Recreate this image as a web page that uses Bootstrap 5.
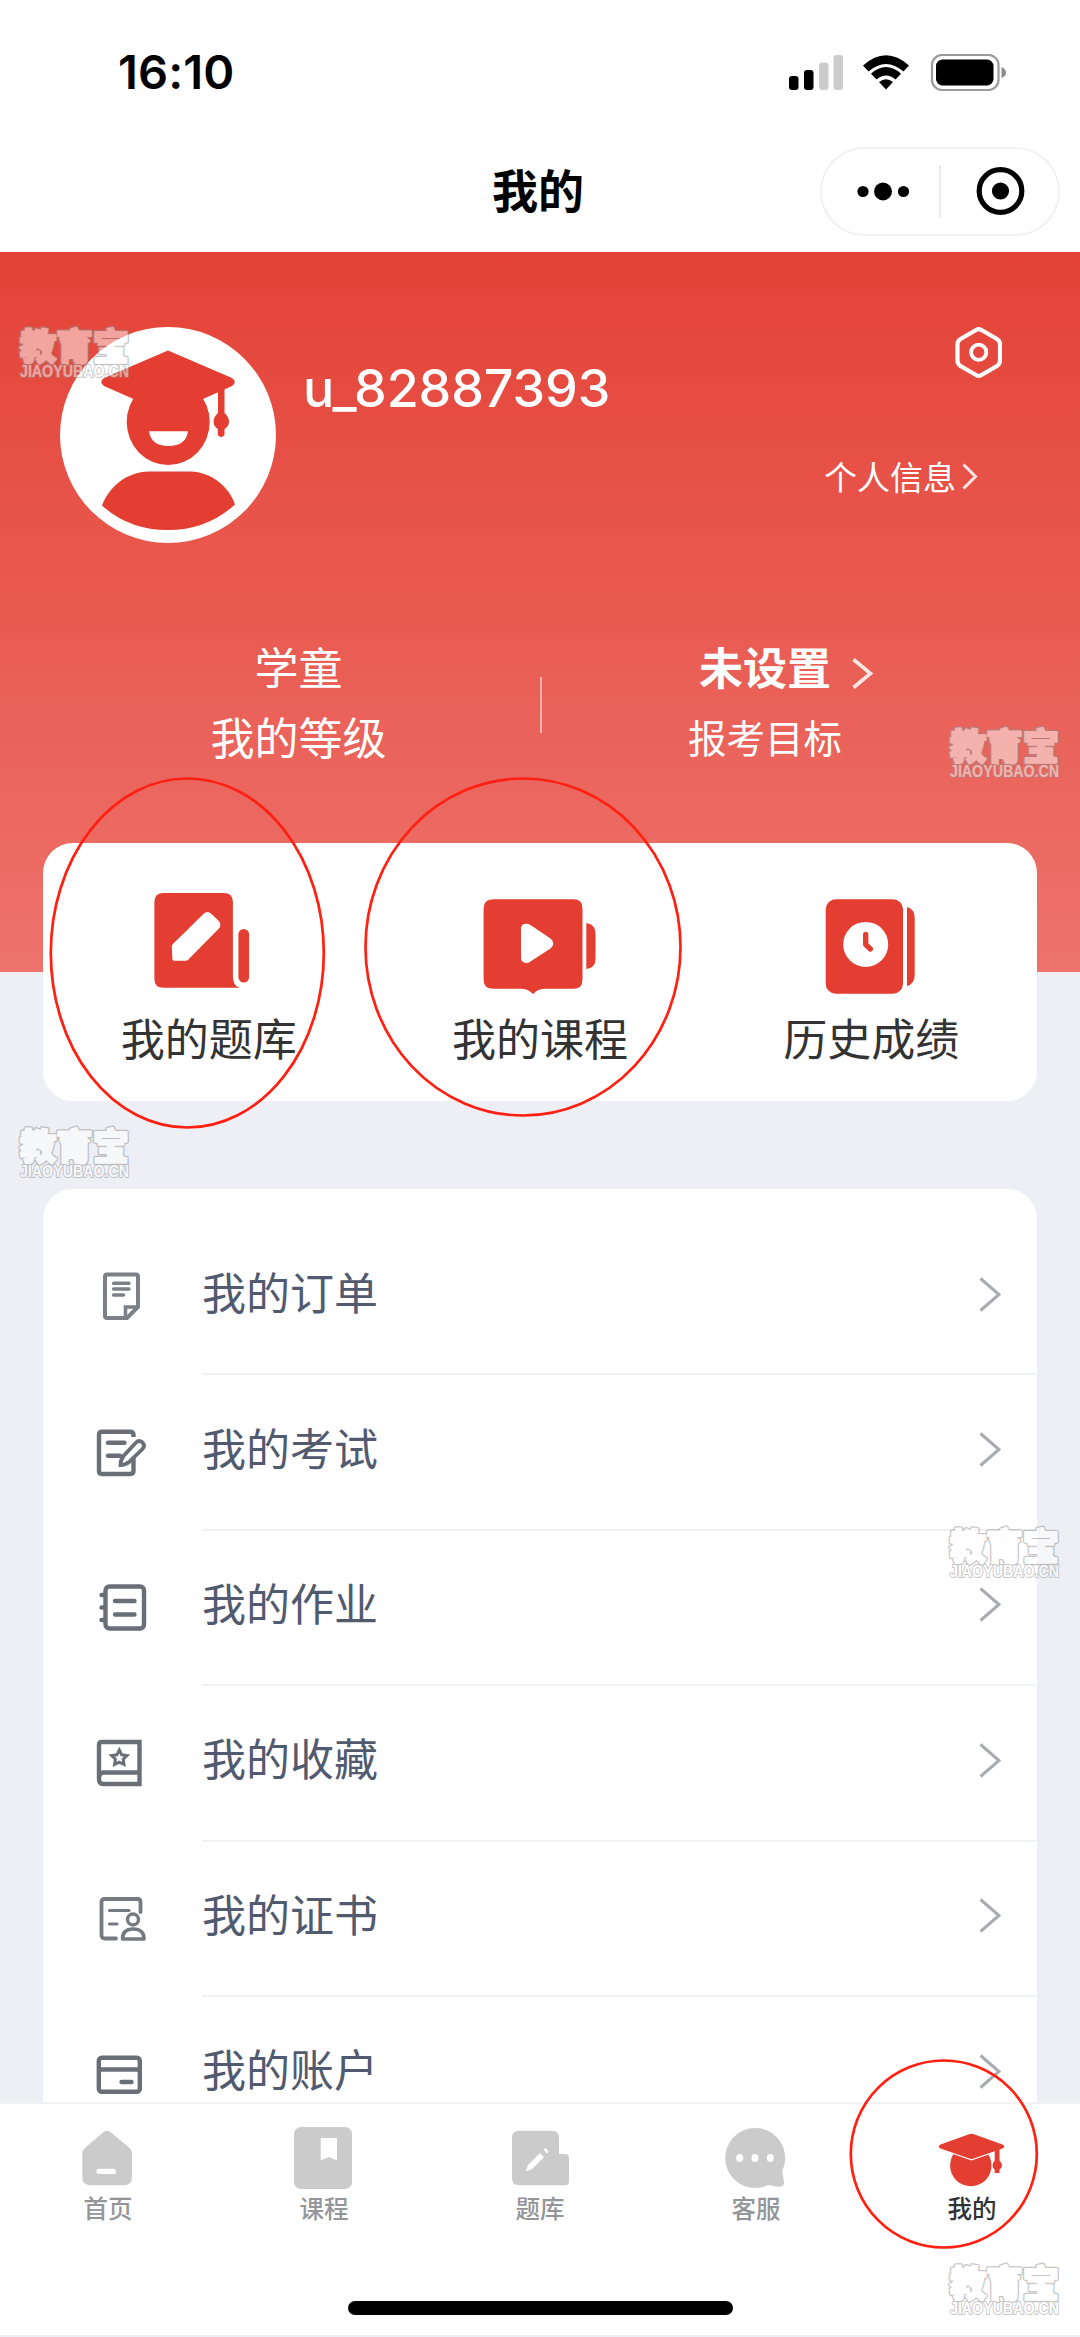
<!DOCTYPE html>
<html lang="zh-CN">
<head>
<meta charset="utf-8">
<meta name="viewport" content="width=device-width, initial-scale=1">
<title>我的</title>
<link href="https://cdn.jsdelivr.net/npm/bootstrap@5.3.0/dist/css/bootstrap.min.css" rel="stylesheet">
<style>
  body { background: #eeeff4; font-family: "Noto Sans CJK SC", sans-serif; }
  svg { display: block; flex: none; }
  .phone { width: 1080px; height: 2337px; }
  .statusbar { height: 147px; padding: 54px 73px 0 118px; }
  .clock { font: 600 47px/36px Inter, sans-serif; letter-spacing: .1px; }
  .titlebar { height: 105px; padding-right: 20px; }
  .page-title { font-size: 46px; line-height: 82px; font-weight: 700; padding-left: 492px; }
  .capsule { width: 240px; height: 89px; border: 2px solid #f1f1f1; border-radius: 45px; }
  .hero { height: 720px; background: linear-gradient(#e44236, #ed736c); padding-top: 75px; }
  .hero-top { padding: 0 78px 0 60px; height: 216px; }
  .username { font: 500 52px/60px Inter, sans-serif; letter-spacing: -.1px; margin: 32px 0 0 27px; }
  .info-link { font-size: 33px; line-height: 40px; margin: 77px 24px 0 0; gap: 6px; }
  .stats { margin-top: 88px; padding: 0 92px 0 57px; }
  .stat { width: 483px; }
  .stat + .vline + .stat { width: 446px; }
  .stat-line { font-size: 44px; line-height: 70px; }
  .goal { font-size: 38.5px; }
  .goal-value svg { margin: 14px -42px 0 21px; }
  .vline { width: 2px; height: 56px; background: rgba(255,255,255,.5); margin-top: 46px; }
  .panel { background: #fff; border-radius: 30px; margin: 0 43px; }
  .quick { margin-top: -129px; height: 258px; padding-top: 45px; position: relative; }
  .quick-label { font-size: 44px; line-height: 66px; color: #333; margin-top: 6px; }
  .menu-panel { margin-top: 88px; padding-top: 31px; height: 1100px; }
  .menu-row { height: 155.4px; padding-left: 47px; }
  .menu-row > svg { margin-bottom: 7px; }
  .menu-body { height: 155.4px; margin-left: 52px; padding: 0 36px 5px 0; border-bottom: 2px solid #f1f2f4; font-size: 44px; line-height: 66px; color: #515a6e; }
  .menu-body span { position: relative; top: -3px; }
  .scroll { min-height: 0; }
  .tabbar { height: 235px; border-top: 2px solid #f2f2f4; border-bottom: 2px solid #eeeff4; background: #fff; }
  .tab { width: 216px; padding-top: 20px; font-size: 24.5px; line-height: 27px; font-weight: 500; color: #949599; }
  .tab.active { color: #2f3336; }
  .home-bar { width: 385px; height: 14px; border-radius: 7px; background: #000; margin-bottom: 20px; }
  .overlay-art { left: 0; top: 0; pointer-events: none; }
  .wm { opacity: .5; stroke-linejoin: round; }
  .wm-cn { font: 900 36px "Noto Sans CJK SC", sans-serif; paint-order: stroke; }
  .wm-en { font: 700 16.5px "Liberation Sans", sans-serif; fill: #fff; stroke: #8f8f8f; stroke-width: 2px; paint-order: stroke; }
</style>
</head>
<body>
<svg width="0" height="0" class="position-absolute">
  <defs>
    <g id="wmark" class="wm">
      <text class="wm-cn" x="0" y="31" fill="#fff" stroke="#8f8f8f" stroke-width="4.600" textLength="109" lengthAdjust="spacingAndGlyphs">教育宝</text>
      <text class="wm-cn" x="0" y="31" fill="#fff" stroke="#fff" stroke-width="2" textLength="109" lengthAdjust="spacingAndGlyphs" aria-hidden="true">教育宝</text>
      <text class="wm-en" x="0" y="48" textLength="109" lengthAdjust="spacingAndGlyphs">JIAOYUBAO.CN</text>
    </g>
    <path id="chev" d="M1.5 1.5 20 17.5 1.5 33.5" fill="none" stroke="#a9abb0" stroke-width="3"/>
  </defs>
</svg>
<div class="phone position-relative overflow-hidden d-flex flex-column">
  <header class="bg-white flex-shrink-0">
    <div class="statusbar d-flex justify-content-between align-items-start">
      <div class="clock text-black">16:10</div>
      <svg width="218" height="37" viewBox="790 53 218 37">
        <rect x="790" y="75" width="9.5" height="14" rx="3"/><rect x="805" y="69" width="9.5" height="20" rx="3"/>
        <rect x="820" y="61.500" width="9.500" height="27.500" rx="3" fill="#ccc"/><rect x="834.500" y="54" width="9.500" height="35" rx="3" fill="#ccc"/>
        <path d="M864 64.500Q887 44 910 64.500L904.500 70.500Q887 55.500 869.500 70.500ZM872 72.700Q887 59.500 902 72.700L896.500 78.500Q887 70.500 877.500 78.500ZM880 81Q887 75.500 894 81L887 88.500Z"/>
        <rect x="933" y="54" width="66.500" height="35" rx="10" fill="none" stroke="#9b9b9b" stroke-width="2.200"/>
        <rect x="937" y="58.500" width="57.500" height="26" rx="6.500"/>
        <path d="M1002.500 66Q1007 68 1007 71.500T1002.500 77Z" fill="#8c8c8c"/>
      </svg>
    </div>
    <div class="titlebar d-flex justify-content-between align-items-start">
      <div class="page-title text-black">我的</div>
      <div class="capsule d-flex align-items-center">
        <svg width="236" height="85" viewBox="822 149 236 85">
          <circle cx="863" cy="191.500" r="5.600"/><circle cx="883" cy="191.500" r="9"/><circle cx="903.500" cy="191.500" r="5.600"/>
          <path d="M940 165V217" stroke="#e6e6e6" stroke-width="1.500"/>
          <circle cx="1000.500" cy="191" r="21.300" fill="none" stroke="#000" stroke-width="5.200"/><circle cx="1000.500" cy="191" r="8.600"/>
        </svg>
      </div>
    </div>
  </header>

  <main class="scroll flex-grow-1 overflow-hidden">
    <section class="hero text-white">
      <div class="hero-top d-flex align-items-start">
        <svg width="216" height="216" viewBox="0 0 216 216">
          <circle cx="108" cy="108" r="108" fill="#fff"/>
          <g fill="#e43d31">
            <ellipse cx="108.200" cy="95" rx="41.500" ry="43"/>
            <path d="M108 23.500 172 51Q177.500 55 172 59L143 72 73.500 72 44 59Q38.500 55 44 51Z"/>
            <path d="M158 62H164.500V86Q169 90 169 94.500T164.500 102V108Q161 112 157.800 108V102Q153.500 99 153.500 94.500T158 86Z"/>
            <path d="M89 144.500H130C152 145 169 160 175 177.500Q147 203 108 203T42 178.500C49 160 66 145 89 144.500Z"/>
          </g>
          <path d="M89 104.300H128Q126 119 108.500 119T89 104.300Z" fill="#fff"/>
        </svg>
        <div class="username">u_82887393</div>
        <div class="ms-auto d-flex flex-column align-items-end">
          <svg width="47" height="52" viewBox="955 327 47 52" fill="none" stroke="#fff" stroke-width="4.200">
            <path d="M976 330Q978.700 328.200 981.500 330L997 339Q1000 341 1000 344V361Q1000 364 997 366L981.500 375Q978.700 376.800 976 375L960.500 366Q957.500 364 957.500 361V344Q957.500 341 960.500 339Z"/>
            <circle cx="978.700" cy="352.300" r="7.600" stroke-width="3.800"/>
          </svg>
          <div class="info-link d-flex align-items-center"><span>个人信息</span>
            <svg width="16" height="27" viewBox="0 0 16 27"><path d="M1.500 1.500 13.500 13.500 1.500 25.500" fill="none" stroke="#fff" stroke-opacity=".85" stroke-width="3"/></svg>
          </div>
        </div>
      </div>
      <div class="stats d-flex align-items-start text-center">
        <div class="stat"><div class="stat-line">学童</div><div class="stat-line">我的等级</div></div>
        <div class="vline"></div>
        <div class="stat">
          <div class="stat-line goal-value fw-bold d-flex justify-content-center align-items-center">未设置
            <svg width="21" height="31" viewBox="0 0 21 31"><path d="M1.500 1.500 18.500 15.500 1.500 29.500" fill="none" stroke="#fff" stroke-opacity=".85" stroke-width="3.600"/></svg>
          </div>
          <div class="stat-line goal">报考目标</div>
        </div>
      </div>
    </section>

    <section class="panel quick row g-0 text-center">
      <div class="col d-flex flex-column align-items-center">
        <svg width="120" height="110" viewBox="148.600 888 120 110" fill="#e43d31">
          <path d="M163 893H223.500Q232.500 893 232.500 902V976Q232.500 986 239 987.700H163Q154 987.700 154 978.700V902Q154 893 163 893Z"/>
          <rect x="238" y="929" width="10.700" height="53.500" rx="5.300"/>
          <path d="M203.500 913.500Q207 910.500 210.500 913.500L218 920.500Q221.500 924.500 218.500 928.500L188 959.500Q187 960.700 185 960.700H173.500Q172 960.700 172 959L171.400 946.500Q171.400 945 172.500 944Z" fill="#fff"/>
        </svg>
        <div class="quick-label">我的题库</div>
      </div>
      <div class="col d-flex flex-column align-items-center">
        <svg width="120" height="110" viewBox="480 888 120 110" fill="#e43d31">
          <path d="M493.600 899.300H573.500Q582.500 899.300 582.500 908.300V979.700Q582.500 988.700 573.500 988.700H545Q539.500 988.700 536 991.500L533 994 530 991.500Q526.500 988.700 521 988.700H493.600Q483.600 988.700 483.600 979.700V908.300Q483.600 899.300 493.600 899.300Z"/>
          <path d="M586.300 923Q595.500 924.500 595.500 934V959Q595.500 968 586.300 969Z"/>
          <path d="M521 929Q521 924 525.500 923.700 528 923.500 530.500 925L550.500 938.500Q556 943.500 550.500 948.500L530.500 961.500Q528 963.500 525.500 963 521 962 521 957.500Z" fill="#fff"/>
        </svg>
        <div class="quick-label">我的课程</div>
      </div>
      <div class="col d-flex flex-column align-items-center">
        <svg width="120" height="110" viewBox="811.300 888 120 110" fill="#e43d31">
          <rect x="826" y="899.300" width="77.300" height="94.500" rx="10"/>
          <path d="M907.300 907Q915 909 915 918V975Q915 984 907.300 986Z"/>
          <circle cx="866" cy="944.400" r="22.500" fill="#fff"/>
          <path d="M866 934.500V944.500L870.700 949" fill="none" stroke="#e43d31" stroke-width="5.300" stroke-linecap="round" stroke-linejoin="round"/>
        </svg>
        <div class="quick-label">历史成绩</div>
      </div>
    </section>

    <section class="panel menu-panel">
      <div class="menu-row d-flex align-items-center">
        <svg width="60" height="60" viewBox="90 1264 60 60" fill="none" stroke="#7d8087" stroke-width="4">
          <path d="M107 1274.500H136Q138 1274.500 138 1276.500V1307L127 1318H107Q105 1318 105 1316V1276.500Q105 1274.500 107 1274.500Z"/>
          <path d="M125.500 1318V1307H138" stroke-width="3.600"/><path d="M113.500 1283.300H129M113.500 1289H129M113.500 1295H123.500" stroke-width="3.400" stroke-linecap="round"/>
        </svg>
        <div class="menu-body flex-grow-1 d-flex align-items-center justify-content-between"><span>我的订单</span><svg width="22" height="35"><use href="#chev"/></svg></div>
      </div>
      <div class="menu-row d-flex align-items-center">
        <svg width="60" height="60" viewBox="90 1419 60 60" fill="none" stroke="#6a6f77" stroke-width="4.400">
          <path d="M133.500 1436V1434Q133.500 1430.700 130 1430.700H102Q99 1430.700 99 1434V1470Q99 1473 102 1473H130Q133.500 1473 133.500 1470V1456"/>
          <path d="M108 1441.700H124.500M108 1454.700H120" stroke-linecap="round"/>
          <path d="M136 1441.500Q139 1438.500 142.500 1441.500 145.500 1445 142.500 1448L129 1461Q125.500 1464 120.500 1464 120.500 1459 123.500 1455Z" stroke-width="3.800"/>
        </svg>
        <div class="menu-body flex-grow-1 d-flex align-items-center justify-content-between"><span>我的考试</span><svg width="22" height="35"><use href="#chev"/></svg></div>
      </div>
      <div class="menu-row d-flex align-items-center">
        <svg width="60" height="60" viewBox="90 1574.500 60 60" fill="none" stroke="#6a6f77" stroke-width="4.400">
          <rect x="105.500" y="1586" width="38.500" height="42" rx="4"/><path d="M115 1600.500H134.500M115 1614H134.500M101.500 1594.500H104M101.500 1607H104M101.500 1619.500H104" stroke-linecap="round"/>
        </svg>
        <div class="menu-body flex-grow-1 d-flex align-items-center justify-content-between"><span>我的作业</span><svg width="22" height="35"><use href="#chev"/></svg></div>
      </div>
      <div class="menu-row d-flex align-items-center">
        <svg width="60" height="60" viewBox="90 1730 60 60" fill="none" stroke="#6a6f77" stroke-width="4.400">
          <path d="M102 1742H139.500V1784H103Q99 1784 99 1778.500V1745Q99 1742 102 1742ZM99 1778.500Q99 1772.500 103.500 1772.500H139.500"/>
          <path d="M119.300 1750 121.700 1754.800 127 1755.500 123.200 1759.300 124 1764.500 119.300 1762.200 114.600 1764.500 115.400 1759.300 111.600 1755.500 116.900 1754.800Z" stroke-width="3"/>
        </svg>
        <div class="menu-body flex-grow-1 d-flex align-items-center justify-content-between"><span>我的收藏</span><svg width="22" height="35"><use href="#chev"/></svg></div>
      </div>
      <div class="menu-row d-flex align-items-center">
        <svg width="60" height="60" viewBox="90 1885 60 60" fill="none" stroke="#757980" stroke-width="3.800" stroke-linecap="round">
          <path d="M140.500 1911V1901Q140.500 1898 137.500 1898H105Q101.500 1898 101.500 1901V1934Q101.500 1937.500 105 1937.500H116"/>
          <path d="M109.500 1909.500H129M109.500 1923H117" stroke-width="3.200"/>
          <circle cx="133" cy="1918.500" r="5.500" stroke-width="3.400"/><path d="M122.500 1938Q122.500 1928 133.300 1928T144 1938Z" stroke-width="3.600" stroke-linejoin="round"/>
        </svg>
        <div class="menu-body flex-grow-1 d-flex align-items-center justify-content-between"><span>我的证书</span><svg width="22" height="35"><use href="#chev"/></svg></div>
      </div>
      <div class="menu-row d-flex align-items-center">
        <svg width="60" height="60" viewBox="90 2040.500 60 60" fill="none" stroke="#6a6f77" stroke-width="4.400">
          <rect x="98.800" y="2057.300" width="41" height="34" rx="3"/><path d="M99 2069H140"/><path d="M121.500 2081.500H131.500" stroke-linecap="round"/>
        </svg>
        <div class="menu-body flex-grow-1 d-flex align-items-center justify-content-between"><span>我的账户</span><svg width="22" height="35"><use href="#chev"/></svg></div>
      </div>
    </section>
  </main>

  <nav class="tabbar flex-shrink-0 d-flex flex-column justify-content-between align-items-center">
    <div class="d-flex text-center">
      <div class="tab d-flex flex-column align-items-center">
        <svg width="70" height="70" viewBox="73 2124 70 70" fill="#cbcbcb">
          <path d="M103 2132.500Q107 2129 111 2132.500L128.500 2147Q132 2150 132 2154V2177Q132 2185.300 123.500 2185.300H91Q82.300 2185.300 82.300 2177V2154Q82.300 2150 86 2147Z"/>
          <rect x="96.400" y="2168.700" width="19.600" height="5.300" rx="2.600" fill="#fff"/>
        </svg>
        <div class="tab-label">首页</div>
      </div>
      <div class="tab d-flex flex-column align-items-center">
        <svg width="70" height="70" viewBox="289 2124 70 70" fill="#cbcbcb">
          <rect x="294" y="2127" width="58" height="62" rx="7"/><path d="M320.700 2139Q320.700 2138 321.700 2138H336Q337 2138 337 2139V2160.500L329 2157 320.700 2160.500Z" fill="#fff"/>
        </svg>
        <div class="tab-label">课程</div>
      </div>
      <div class="tab d-flex flex-column align-items-center">
        <svg width="70" height="70" viewBox="505 2124 70 70" fill="#cbcbcb">
          <path d="M519 2130.700H552Q559 2130.700 559 2137.700V2154H565Q569 2154 569 2158V2181Q569 2185.300 565 2185.300H519Q512 2185.300 512 2178.300V2137.700Q512 2130.700 519 2130.700Z"/>
          <path d="M526.500 2170.800 528.500 2165 540 2153.500 543.500 2157 532.200 2168.500Z M544 2149.500 545.500 2148.500 548 2151.500 547 2153Z" fill="#fff" stroke="#fff"/>
        </svg>
        <div class="tab-label">题库</div>
      </div>
      <div class="tab d-flex flex-column align-items-center">
        <svg width="70" height="70" viewBox="721 2124 70 70" fill="#cbcbcb">
          <circle cx="755.200" cy="2158" r="30"/><path d="M782 2170 784 2182Q784.500 2186.500 779.500 2186.700 773 2186.700 766 2184Z"/>
          <g fill="#fff"><ellipse cx="739.700" cy="2158" rx="3.500" ry="4"/><ellipse cx="755" cy="2158" rx="3.500" ry="4"/><ellipse cx="770.300" cy="2158" rx="3.500" ry="4"/></g>
        </svg>
        <div class="tab-label">客服</div>
      </div>
      <div class="tab active d-flex flex-column align-items-center">
        <svg width="70" height="70" viewBox="937 2124 70 70" fill="#e43d31">
          <circle cx="970.800" cy="2165.500" r="20.700"/>
          <path d="M940.500 2144.500 969 2134.200Q971.500 2133.400 974 2134.200L1002.500 2144.500Q1006 2146.500 1002.500 2148.500L971.500 2159.300 940.500 2148.500Q937 2146.500 940.500 2144.500Z" stroke="#fff" stroke-width="2.400" paint-order="stroke"/>
          <path d="M994.700 2148H999.500V2160.500Q1002 2163 1002 2165.500T999.500 2169.500V2173H994.700V2169.500Q992.500 2168 992.500 2165.500T994.700 2160.500Z"/>
        </svg>
        <div class="tab-label">我的</div>
      </div>
    </div>
    <div class="home-bar"></div>
  </nav>

  <svg class="overlay-art position-absolute" width="1080" height="2337">
    <g fill="none" stroke="#ff2012" stroke-width="2.700">
      <ellipse cx="187.300" cy="953" rx="136.500" ry="174.500"/><ellipse cx="523" cy="947" rx="157.500" ry="168.500"/><ellipse cx="943.800" cy="2154" rx="93" ry="93.500"/>
    </g>
    <use href="#wmark" x="20" y="329"/><use href="#wmark" x="950" y="729"/><use href="#wmark" x="20" y="1129"/><use href="#wmark" x="950" y="1529"/><use href="#wmark" x="950" y="2266"/>
  </svg>
</div>
<script src="https://cdn.jsdelivr.net/npm/bootstrap@5.3.0/dist/js/bootstrap.bundle.min.js"></script>
</body>
</html>
